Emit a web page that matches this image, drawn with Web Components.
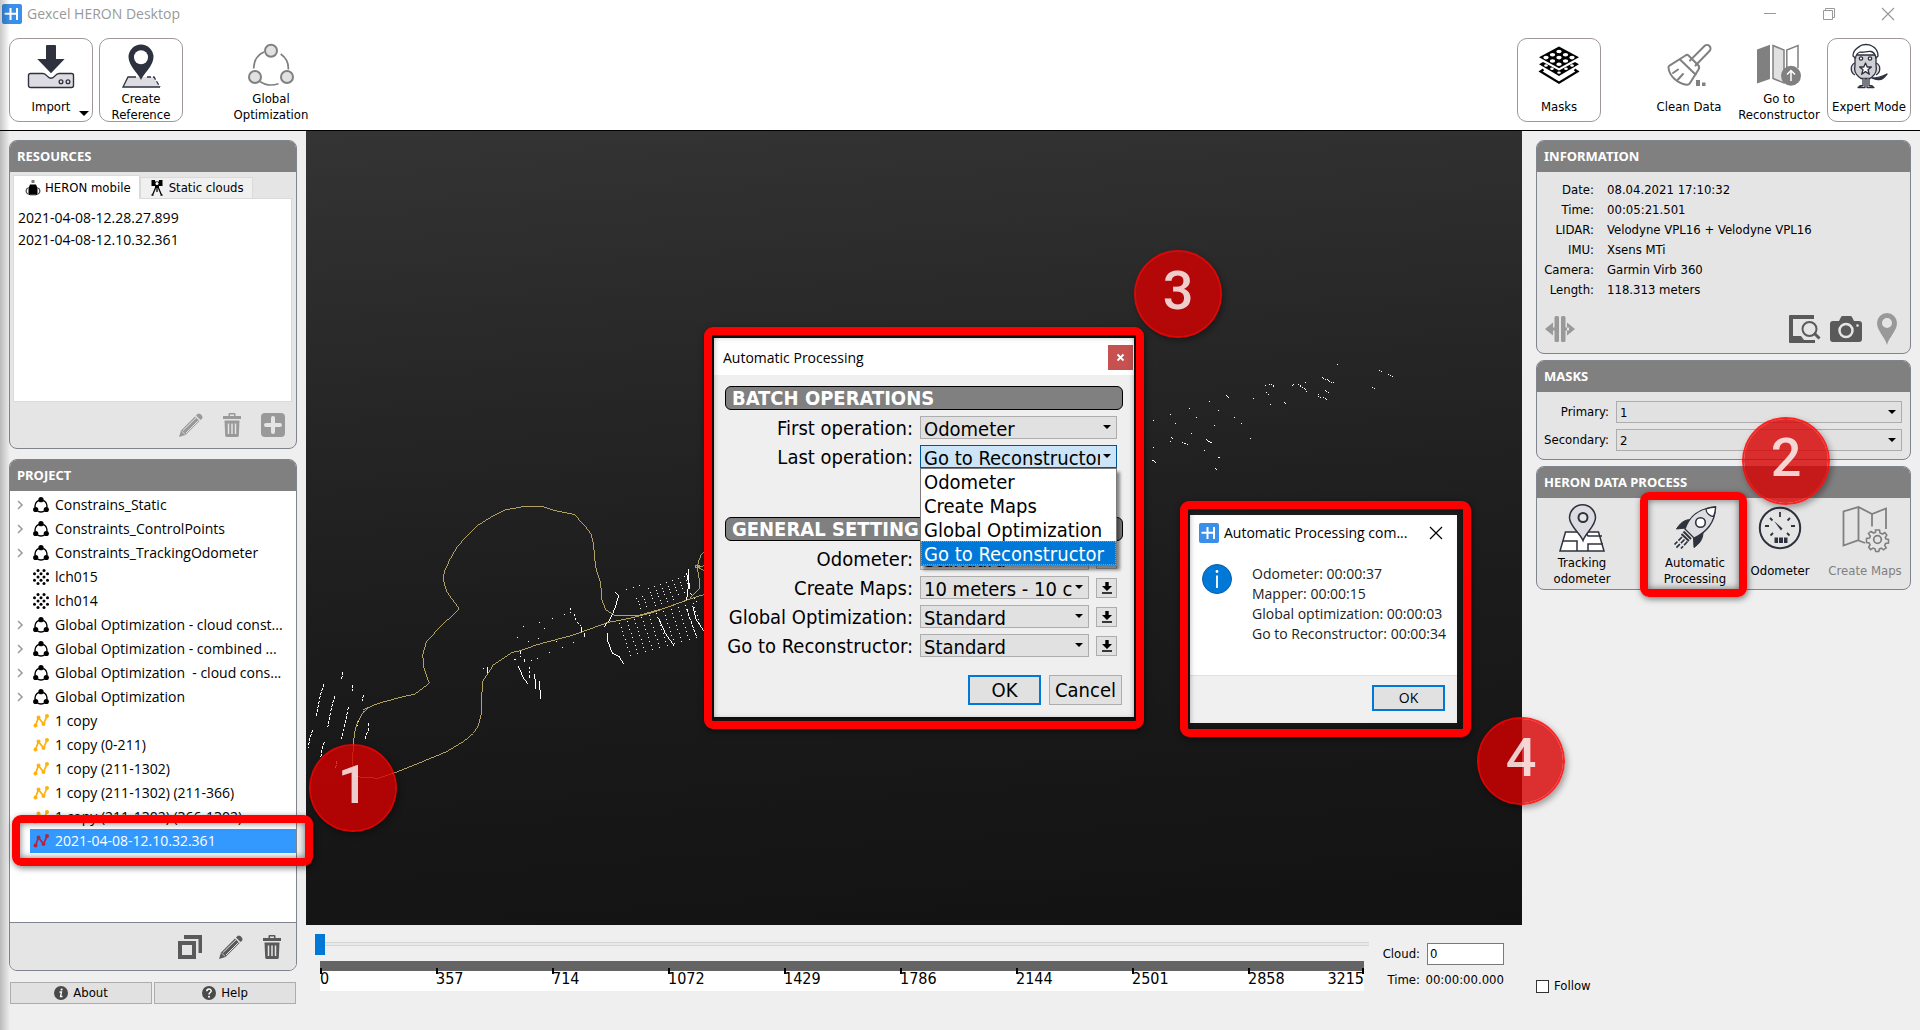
<!DOCTYPE html>
<html lang="en">
<head>
<meta charset="utf-8">
<title>Gexcel HERON Desktop</title>
<style>
  html, body { margin: 0; height: 100%; }
  body { background: #efefef; }
</style>
</head>
<body>
<heron-app></heron-app>
<script>
const BASE = `
  *, *::before, *::after { box-sizing: border-box; }
  :host { box-sizing: border-box; }
  button { font: inherit; color: inherit; margin: 0; padding: 0; border: 0; background: none; }
  ul, dl, dd, h2, p { margin: 0; padding: 0; list-style: none; }
  svg { display: block; }
`;

const D = '#2e323e';
const ICONS = {
  logo: ['0 0 20 20', `<rect width="20" height="20" rx="2" fill="#3a8fe8"/><path d="M8.500 4v12M15 4v12M2.500 9.800H15" stroke="#fff" stroke-width="2" fill="none"/>`],
  import: ['0 0 48 48', `<path d="M3.500 30.500H16c4 0 4 4.800 8 4.800s4-4.800 8-4.800h12.500a2 2 0 0 1 2 2v10a2 2 0 0 1-2 2h-41a2 2 0 0 1-2-2v-10a2 2 0 0 1 2-2z" fill="#dcdce2" stroke="${D}" stroke-width="1.400"/><circle cx="34" cy="38.700" r="1.900" fill="none" stroke="${D}" stroke-width="1.300"/><circle cx="41" cy="38.700" r="1.900" fill="none" stroke="${D}" stroke-width="1.300"/><path d="M19 3a1 1 0 0 1 1-1h8a1 1 0 0 1 1 1v13h8.600L24 30.300 10.300 16H19z" fill="${D}"/>`],
  reference: ['0 0 48 48', `<path d="M11 34h26l6 10H6z" fill="#dcdce2"/><path d="M19 34h-8L6 44h37" fill="none" stroke="${D}" stroke-width="1.300"/><path d="M30 34h7l6 10" fill="none" stroke="${D}" stroke-width="1.300" stroke-dasharray="4 2"/><path d="M24 37c-2-6-12.500-14-12.500-23a12.500 12.500 0 0 1 25 0C36.500 23 26 31 24 37z" fill="${D}"/><circle cx="24" cy="14.300" r="7" fill="#fff"/>`],
  global: ['0 0 48 48', `<g fill="none" stroke="#808080" stroke-width="1.700"><path d="M6.700 25.500C7 17 11 11.500 17 9M33.700 11c5 3.500 8 9 7.600 15.500M13 38.500c6 4.300 12 4.300 18.500 2.200"/><g fill="#e1e1e1" stroke-width="2"><circle cx="24" cy="7.700" r="6"/><circle cx="8" cy="34" r="6"/><circle cx="40" cy="34" r="6"/></g></g>`],
  masks: ['0 0 48 48', `<path d="M24 3.500 44 14.300 24 25.200 4 14.300z"/><g fill="#fff"><ellipse cx="24" cy="8.500" rx="2.700" ry="1.800"/><ellipse cx="17.500" cy="11.700" rx="2.700" ry="1.800"/><ellipse cx="30.500" cy="11.700" rx="2.700" ry="1.800"/><ellipse cx="11" cy="14.600" rx="2.700" ry="1.800"/><ellipse cx="24" cy="14.600" rx="2.700" ry="1.800"/><ellipse cx="37" cy="14.600" rx="2.700" ry="1.800"/><ellipse cx="17.500" cy="18" rx="2.700" ry="1.800"/><ellipse cx="30.500" cy="18" rx="2.700" ry="1.800"/><ellipse cx="24" cy="21.300" rx="2.700" ry="1.800"/></g><path d="M4 21.200 8 19l16 8.500L40 19l4 2.200L24 33z"/><g fill="#fff"><ellipse cx="11" cy="22.500" rx="1.800" ry="1.200"/><ellipse cx="17" cy="25.700" rx="1.800" ry="1.200"/><ellipse cx="24" cy="29.600" rx="1.800" ry="1.200"/><ellipse cx="31" cy="25.700" rx="1.800" ry="1.200"/><ellipse cx="37" cy="22.500" rx="1.800" ry="1.200"/></g><path d="M8.500 26.500 5.500 28.500 24 39.800l18.500-11.300-3-2" fill="none" stroke="#000" stroke-width="2.200"/>`],
  clean: ['0 0 48 48', `<g fill="none" stroke="#808080" stroke-width="2" stroke-linejoin="round" stroke-linecap="round"><path d="M25 17.500 39.500 3a3.500 3.500 0 0 1 5 5L30.500 22.500"/><path d="M20.500 12.500c1-1 2-1 3 0l9.500 9.500c1.500 1.500 1.500 3 .5 4.500L25 40c-.8 1.500-2 2-3.500 1.800C12 40 4.500 33 3.500 25c-.2-1 0-1.800 1-2.400z"/><path d="M15 16.500 30.500 31.500M8 30l5-3.500M13 36.500l5-5.500M9 26"/></g><path d="M31 37h4v6h-4zM37 39.500h3.500V43H37z" fill="#808080"/>`],
  recon: ['0 0 48 48', `<path d="M2 6.500 15 1.800V36L2 40.500z" fill="#808080"/><path d="M18 2.500l11 4.500v33L18 35.500z" fill="#e1e1e1" stroke="#808080" stroke-width="1.500"/><path d="M31.800 25V7L43 2.500V25" fill="#fff" stroke="#808080" stroke-width="1.500"/><circle cx="36" cy="32.700" r="10" fill="#808080"/><path d="M36 38V28M32 31.500l4-4 4 4" stroke="#fff" stroke-width="1.500" fill="none"/>`],
  expert: ['0 0 48 48', `<g stroke="${D}" stroke-width="1.300" stroke-linejoin="round"><path d="M27 35c6 0 9-1 15-4-3 4-6 6.500-9 5.500-3 0-4-1-6-1.500z" fill="${D}"/><path d="M10 20c-5 2-5 9 0 12M31 20c5 2 5 9 0 12" fill="#dcdce2"/><path d="M10 12v10c-1 5 0 9 4 12l2 1.500h9l2-1.500c4-3 5-7 4-12V12z" fill="#cfcfd6"/><path d="M8 13C8 6 13 5 15 3c3-2 9-2 12 0 4 2 6 6 6 10l-2 2c-1-5-3-6-5-6.500-4-.5-8 1.500-11 .5-3 1-4 3-4.500 6z" fill="#fff"/><path d="M18 35v7.500c-2 0-4 .5-5 2h7V36M22 36v8.500h7c-1-1.500-3-2-5-2V35" fill="#fff"/><circle cx="16" cy="15.500" r="1.700" fill="#fff"/><circle cx="25" cy="15.500" r="1.700" fill="#fff"/><path d="m20.500 20 1.700 4h4.200L23 26.800l1.300 4.500-3.800-2.700-3.800 2.700 1.300-4.500-3.400-2.800h4.200z" fill="#fff"/></g>`],
  tracking: ['0 0 48 48', `<g stroke="${D}" stroke-width="1.500"><path d="M7.500 28h33L46 47H2z" fill="#fff"/><path d="M5 37h14v10M28 29l2 3h14M30 47v-7h15" fill="none"/><path d="M25 36.500C22 29 11.500 22 11.500 13.800a13 13 0 0 1 26 0C37.500 22 27.500 29 25 36.500z" fill="#dcdce2"/><circle cx="25" cy="13.500" r="4.500" fill="#e5e5e5" stroke-width="2"/></g>`],
  rocket: ['0 0 48 48', `<path d="M20 15.500c-7 0-11 4-14.500 9.500l9.500-1zM32 28c0 8-4 12-9 15.500l-.5-10z" fill="${D}" stroke="${D}"/><g stroke="${D}" stroke-width="1.300"><path d="M14 25C18 13 28 4 44.500 3 44.500 18 35 29 23 34z" fill="#dcdce2"/><path d="M35 5c4-1.600 6-2 9.500-2 0 4-.5 6-2 9.500C39 12.500 35 9 35 5z" fill="#fff"/><circle cx="29.500" cy="18.500" r="4.800" fill="#fff" stroke-width="1.600"/><path d="m12.500 27.500 7.500 7.500M10.500 30l7.500 7" fill="none" stroke-width="2"/><path d="M11 33 3.500 40.500M13.500 35.500 5 44M16.500 37.500l-6.500 7" fill="none" stroke-width="1.700" stroke-dasharray="5 1.500"/></g>`],
  gauge: ['0 0 48 48', `<circle cx="24" cy="24" r="20.200" fill="#e5e5e5" stroke="${D}" stroke-width="2"/><path d="M24 8v5M14 14l2.500 2.500M34 14l-2.500 2.500M9 22h4M39 22h-4M14.500 31.500 17 29M33.500 31.500 31 29" stroke="${D}" stroke-width="1.800"/><path d="m18 17 8.500 7.500-1.500 2z" fill="${D}"/><path d="M18.500 33.500h3.500v5.500h-3.500zM23 33.500h4v5.500h-4zM28 33.500h3.500v5.500h-3.500z" fill="${D}"/>`],
  maps: ['0 0 48 48', `<g fill="none" stroke="#808080" stroke-width="1.800"><path d="M17.500 3v33L2.500 41.500V7.500L17.500 3l13.500 7L45 4.500V25M31 10v12.500M17.500 36.500 24 39"/><circle cx="36.500" cy="35.500" r="3.800"/><path d="M34.500 26h4l.5 3 2.500 1 2.300-1.500 2 2.500-1.500 2.500.7 1.500 2.500.5v3.500l-3 .5-.8 2 1.500 2.300-2.700 2-2-1.700-2 .8-.8 2.600h-3l-.7-2.600-2-.8-2.500 1.500-1.800-2.300 1.300-2.300-.8-2-2.700-.5V34.500l3-.5.8-2-1.800-2.500 2.500-2 2.500 1.500 2-.8z" stroke-width="1.600"/></g>`],
  pencil: ['0 0 24 24', `<path d="M0 24 2 17.500 16 3.500 20.500 8 6.500 22z"/><path d="m17 2.500 1.500-1.500c2-2 5.500 2 5 3.700-.3 1-1.200 1.600-2 2.300z"/><path d="m4 17.500 13-12.700M7 20 19.500 7.500" stroke="#e5e5e5" stroke-width="1"/><path d="m2.500 18 3.700 3.500" stroke="#e5e5e5" stroke-width=".8"/>`],
  trash: ['0 0 24 24', `<path d="M3 3h5.500V1q0-1 1-1h5q1 0 1 1v2H21v3H3zM10 1.500V3h4V1.500z" fill-rule="evenodd"/><path d="M4.500 7.500h15l-.7 15q-.1 1.500-1.500 1.500H6.700q-1.400 0-1.500-1.500z"/><path d="M8.500 10.500V21M12 10.500V21M15.500 10.500V21" stroke="#e5e5e5" stroke-width="1.500"/>`],
  plus: ['0 0 24 24', `<rect width="24" height="24" rx="4"/><path d="M12 5v14M5 12h14" stroke="#e5e5e5" stroke-width="4" stroke-linecap="round"/>`],
  copy: ['0 0 24 24', `<path d="M6 0h18v18h-3.500V4H6z"/><path fill-rule="evenodd" d="M0 6h18v18H0zm4 4v10h10V10z"/>`],
  split: ['0 0 30 26', `<rect x="9.500" width="4.500" height="26" rx="1.500"/><rect x="16" width="4.500" height="26" rx="1.500"/><path d="M8 6.500v13L0 13zM22 6.500v13l8-6.500zM6 11.500h4v3H6zM20 11.500h4v3h-4z"/>`],
  search: ['0 0 32 30', `<path d="M0 2q0-1 1-1h24v4H4v17h8l3 4h11v3H1q-1 0-1-1z"/><circle cx="20.500" cy="15" r="7" fill="#e5e5e5" stroke="currentColor" stroke-width="2"/><path d="m25 19 5.500 5.500" stroke="currentColor" stroke-width="3"/>`],
  camera: ['0 0 32 26', `<path d="M3 5h6l2-4q.5-1 1.500-1h8q1 0 1.500 1l2 4H29q3 0 3 3v15q0 3-3 3H3q-3 0-3-3V8q0-3 3-3z"/><circle cx="16" cy="14.500" r="6.500" fill="none" stroke="#e5e5e5" stroke-width="2.500"/><circle cx="27.500" cy="9.500" r="1.300" fill="#e5e5e5"/>`],
  pin: ['0 0 20 32', `<path fill-rule="evenodd" d="M10 32C8 24 0 18 0 10a10 10 0 0 1 20 0c0 8-8 14-10 22zm0-27a5 5 0 1 0 0 10 5 5 0 0 0 0-10z"/>`],
  cluster: ['0 0 16 16', `<circle cx="8" cy="9" r="6" fill="none" stroke="#000" stroke-width="1.400"/><circle cx="8" cy="2.700" r="2.600"/><circle cx="2.700" cy="12.500" r="2.600"/><circle cx="13.300" cy="12.500" r="2.600"/>`],
  dots: ['0 0 16 16', [[5,1.5],[11,1.5],[1.5,4.8],[8,4.8],[14.5,4.8],[5,8],[11,8],[1.5,11.2],[8,11.2],[14.5,11.2],[5,14.5],[11,14.5]].map(p=>`<circle cx="${p[0]}" cy="${p[1]}" r="1.500"/>`).join('')],
  track: ['0 0 16 16', `<path d="M2.500 12.500 5.500 4.500 10.500 11 14 3" fill="none" stroke="currentColor" stroke-width="1.800"/><circle cx="2.500" cy="12.500" r="2"/><circle cx="5.500" cy="4.500" r="2"/><circle cx="10.500" cy="11" r="2"/><circle cx="14" cy="3" r="2"/>`],
  backpack: ['0 0 16 16', `<path d="M6.500 0h3v3h-3z" fill="#777"/><path d="M5 4.500h6l1 2.500H4z"/><path d="M3.500 7h9v8h-9z"/><path d="M3 8c-2.500 1-2.500 5 0 6M13 8c2.500 1 2.500 5 0 6" fill="none" stroke="#555" stroke-width="1.300"/><path d="M5 15h6" stroke="#777"/>`],
  tripod: ['0 0 16 16', `<path d="M2.500 0h3.500v1.500h4V0h3.500v6h-3.500v2h-4V6H2.500z"/><circle cx="8" cy="3.500" r="1.500" fill="#fff"/><path d="M6.500 8 3.500 15M9.500 8l3 7M8 8v4M2.500 15h2M11.500 15h2" stroke="#000" stroke-width="1.300" fill="none"/>`],
  about: ['0 0 14 14', `<circle cx="7" cy="7" r="7" fill="#4a4a4a"/><circle cx="7.600" cy="3.500" r="1.100" fill="#fff"/><path d="M5.500 6h2L6.500 10.500h2" stroke="#fff" stroke-width="1.300" fill="none"/>`],
  help: ['0 0 14 14', `<circle cx="7" cy="7" r="7" fill="#4a4a4a"/><path d="M4.800 5.300c0-3 4.400-3 4.400-.3C9.200 6.500 7 6.600 7 8.600" stroke="#fff" stroke-width="1.500" fill="none"/><circle cx="7" cy="10.800" r="1" fill="#fff"/>`],
  chevron: ['0 0 8 10', `<path d="m2 1 4 4-4 4" fill="none" stroke="#a0a0a0" stroke-width="1.700"/>`],
  minimize: ['0 0 12 12', `<path d="M0 5.500h12" stroke="currentColor"/>`],
  restore: ['0 0 12 12', `<path d="M.5 2.500h9v9h-9zM2.500 2.500v-2h9v9h-2" fill="none" stroke="currentColor"/>`],
  close: ['0 0 12 12', `<path d="m0 0 12 12M12 0 0 12" fill="none" stroke="currentColor" stroke-width="1.200"/>`],
  cross: ['0 0 7 7', `<path d="m.5.500 6 6M6.500.500l-6 6" fill="none" stroke="#fff" stroke-width="1.800"/>`],
  download: ['0 0 10 12', `<path d="M3.300 0h3.400v4H10L5 9 0 4h3.300zM0 10.300h10v1.500H0z"/>`],
  info: ['0 0 30 30', `<circle cx="15" cy="15" r="14.500" fill="#0078d7" stroke="#0a5ea8"/><path d="M15 11.500V24" stroke="#fff" stroke-width="1.800"/><circle cx="15" cy="7.500" r="1.400" fill="#fff"/>`],
};

class UiIcon extends HTMLElement {
  connectedCallback() {
    const [box, body] = ICONS[this.getAttribute('name')];
    const [, , w, h] = box.split(' ');
    this.attachShadow({ mode: 'open' }).innerHTML = `<style>${BASE}
      :host { display: block; flex: none; width: ${w}px; height: ${h}px; }
      svg { width: 100%; height: 100%; overflow: visible; }</style>
      <svg viewBox="${box}" fill="currentColor" aria-hidden="true">${body}</svg>`;
  }
}
customElements.define('ui-icon', UiIcon);

/* Declares an element whose shadow root is built from a function of the element. */
function define(name, render) {
  customElements.define(name, class extends HTMLElement {
    connectedCallback() {
      if (this.shadowRoot) return;
      const t = document.createElement('template');
      t.innerHTML = render(this);
      this.attachShadow({ mode: 'open' }).append(t.content.cloneNode(true));
    }
  });
}

define('title-bar', () => `<style>${BASE}
  :host { display: flex; align-items: center; gap: 5px; height: 28px; padding: 0 26px 0 2px; background: #fff; color: #999; font: 14px/20px var(--segoe); }
  span { flex: 1; }
  nav { display: flex; gap: 47px; }
  button { display: block; }
</style>
<ui-icon name="logo"></ui-icon><span>Gexcel HERON Desktop</span>
<nav><button aria-label="Minimize"><ui-icon name="minimize"></ui-icon></button><button aria-label="Restore"><ui-icon name="restore"></ui-icon></button><button aria-label="Close"><ui-icon name="close"></ui-icon></button></nav>`);

define('tool-button', el => `<style>${BASE}
  :host { display: block; flex: none; width: 84px; height: 84px; position: relative; }
  button { display: flex; flex-direction: column; align-items: center; width: 100%; height: 84px; padding-top: 4px; border: 1px solid transparent; border-radius: 10px; color: #000; font: 13px/16px var(--tahoma); }
  :host([framed]) button { border-color: #a09898; }
  :host([off]) button { color: #808080; }
  .label { display: flex; flex: none; align-items: center; justify-content: center; height: 32px; margin-top: var(--label-gap, 0); text-align: center; white-space: nowrap; }
  :host([menu]) button::after { content: ""; position: absolute; right: 4px; bottom: 6px; border: 5px solid transparent; border-top-color: #000; border-bottom: 0; }
</style>
<button ${el.hasAttribute('off') ? 'disabled' : ''}><ui-icon name="${el.getAttribute('icon')}"></ui-icon><span class="label"><span><slot></slot></span></span></button>`);

define('side-panel', el => `<style>${BASE}
  :host { display: flex; flex-direction: column; border: 1px solid #80848f; border-radius: 8px; background: #e5e5e5; overflow: hidden; }
  h2 { flex: none; height: 31px; padding: 0 7px; background: #808080; color: #fff; font: bold 13px/31px var(--heading); }
</style>
<h2>${el.getAttribute('heading')}</h2><slot></slot>`);

define('icon-bar', () => `<style>${BASE}
  :host { display: flex; align-items: center; justify-content: flex-end; gap: 17px; height: 46px; padding: 0 11px; color: #999; }
  :host([dark]) { color: #5a5a5a; height: 48px; padding: 0 12px; border-top: 1px solid #80848f; background: #e5e5e5; }
</style><slot></slot>`);

define('icon-button', el => `<style>${BASE}
  :host { display: block; }
  button { display: block; }
</style><button aria-label="${el.getAttribute('label')}"><ui-icon name="${el.getAttribute('icon')}"></ui-icon></button>`);

define('resource-tabs', () => `<style>${BASE}
  :host { display: block; padding: 3px 4px 0 3px; }
  nav { display: flex; align-items: flex-end; }
  button { display: flex; align-items: center; gap: 4px; height: 21px; padding: 0 8px; margin-top: 2px; border: 1px solid #dadada; border-bottom: 0; background: #f0f0f0; color: #000; font: 13px/20px var(--tahoma); }
  button[aria-selected=true] { height: 24px; margin: 0 0 -1px; padding: 0 8px 0 11px; background: #fff; position: relative; }
  ul { height: 204px; padding: 8px 4px; border: 1px solid #dadada; background: #fff; font: 14px/22px var(--segoe); }
</style>
<nav role="tablist"><button role="tab" aria-selected="true"><ui-icon name="backpack"></ui-icon>HERON mobile</button><button role="tab" aria-selected="false"><ui-icon name="tripod"></ui-icon>Static clouds</button></nav>
<ul><li>2021-04-08-12.28.27.899</li><li>2021-04-08-12.10.32.361</li></ul>`);

define('tree-item', el => `<style>${BASE}
  :host { display: flex; align-items: center; height: 24px; padding-left: 6px; font: 14px/24px var(--segoe); }
  .twist { width: 14px; flex: none; }
  .row { flex: 1; display: flex; align-items: center; gap: 6px; padding-left: 3px; min-width: 0; }
  .name { white-space: pre; }
  :host([kind=track]) ui-icon { color: #ffb20f; }
  :host([selected]) .row { background: #3399ff; color: #fff; }
  :host([selected]) ui-icon { color: #b3263f; }
</style>
<span class="twist">${el.getAttribute('kind') === 'cluster' ? '<ui-icon name="chevron"></ui-icon>' : ''}</span><span class="row"><ui-icon name="${el.getAttribute('kind')}"></ui-icon><span class="name"><slot></slot></span></span>`);

define('project-tree', () => {
  const rows = [
    ['cluster', 'Constrains_Static'], ['cluster', 'Constraints_ControlPoints'], ['cluster', 'Constraints_TrackingOdometer'],
    ['dots', 'lch015'], ['dots', 'lch014'],
    ['cluster', 'Global Optimization - cloud const...'], ['cluster', 'Global Optimization - combined ...'],
    ['cluster', 'Global Optimization  - cloud cons...'], ['cluster', 'Global Optimization'],
    ['track', '1 copy'], ['track', '1 copy (0-211)'], ['track', '1 copy (211-1302)'],
    ['track', '1 copy (211-1302) (211-366)'], ['track', '1 copy (211-1302) (366-1302)'], ['track', '2021-04-08-12.10.32.361', 'selected'],
  ];
  return `<style>${BASE} :host { display: block; flex: 1; padding-top: 2px; background: #fff; }</style>` +
    rows.map(r => `<tree-item kind="${r[0]}" ${r[2] || ''}>${r[1]}</tree-item>`).join('');
});

define('text-button', el => `<style>${BASE}
  :host { display: block; }
  button { display: flex; align-items: center; justify-content: center; gap: 5px; width: 100%; height: 100%; border: 1px solid #adadad; background: #e1e1e1; color: #000; }
  :host([primary]) button { border: 2px solid #0078d7; }
</style><button>${el.hasAttribute('icon') ? `<ui-icon name="${el.getAttribute('icon')}"></ui-icon>` : ''}<slot></slot></button>`);

define('combo-field', el => `<style>${BASE}
  :host { display: flex; align-items: center; gap: 7px; height: var(--combo-height, 22px); line-height: 22px; }
  label { flex: none; width: var(--combo-label, 66px); text-align: right; white-space: nowrap; }
  .box { flex: 1; min-width: 0; position: relative; display: flex; }
  select { appearance: none; width: 100%; height: var(--combo-height, 22px); margin: 0; padding: 0 var(--combo-end, 18px) 0 3px; border: 1px solid #adadad; border-radius: 0; background: #e1e1e1; color: #000; font: inherit; line-height: normal; text-overflow: clip; }
  :host([open]) select { background: #cce4f7; border-color: #005499; }
  .box::after { content: ""; position: absolute; right: 6px; top: 9px; border: 4px solid transparent; border-top-color: #000; border-bottom: 0; pointer-events: none; }
</style>
<label for="s">${el.getAttribute('label')}</label><span class="box"><select id="s"><option>${el.getAttribute('value')}</option></select></span><slot></slot>`);

define('info-list', () => `<style>${BASE}
  :host { display: block; padding: 8px 7px 0; font: 13px/20px var(--tahoma); }
  dl { display: grid; grid-template-columns: 50px 1fr; column-gap: 13px; }
  dt { text-align: right; }
  .bar { display: flex; align-items: center; gap: 9px; height: 53px; padding: 4px 6px 0 1px; color: #5a5a5a; }
  .bar :first-child { margin-right: auto; }
  .bar :last-child { margin-left: 6px; }
  .pale { color: #999; }
</style>
<dl><dt>Date:</dt><dd>08.04.2021 17:10:32</dd><dt>Time:</dt><dd>00:05:21.501</dd><dt>LIDAR:</dt><dd>Velodyne VPL16 + Velodyne VPL16</dd><dt>IMU:</dt><dd>Xsens MTi</dd><dt>Camera:</dt><dd>Garmin Virb 360</dd><dt>Length:</dt><dd>118.313 meters</dd></dl>
<div class="bar"><icon-button class="pale" icon="split" label="Split"></icon-button><icon-button icon="search" label="Preview"></icon-button><icon-button icon="camera" label="Camera"></icon-button><icon-button class="pale" icon="pin" label="Position"></icon-button></div>`);

define('cloud-scene', () => {
  const dots = [[160,571],[211,553],[226,580],[268,535],[289,562],[328,514],[355,541],[343,586],[274,610],[403,562],[424,580],[451,625],[313,661],[160,652],[211,634],[214,622],[217,625],[247,637],[253,640],[256,640],[262,643],[319,628],[322,631],[325,634],[328,634],[331,637],[334,637],[355,682],[358,682],[346,715],[349,718],[157,691],[160,691],[163,694],[166,697],[379,496],[382,499],[385,502],[460,505],[496,466],[508,463],[514,463],[520,466],[520,469],[499,487],[505,493],[511,523],[553,517],[556,520],[577,466],[580,463],[595,463],[601,466],[601,471],[607,474],[613,475],[616,457],[616,480],[619,484],[655,493],[655,499],[661,502],[670,502],[676,505],[679,508],[676,481],[679,484],[685,487],[667,442],[670,445],[676,448],[682,448],[685,451],[688,454],[694,457],[700,457],[712,403],[838,421],[844,424],[865,433],[871,436],[877,439],[817,472],[823,475]];
  const seeds = [[652,472],[670,439],[716,427],[757,415],[793,403],[685,484],[715,475],[733,445],[769,484],[787,502],[748,517],[820,487],[712,535],[694,541],[550,565],[979,328],[1000,322],[1018,316]];
  let grid = '';
  for (let r = 0; r < 8; r++) for (let c = 0; c < 9; c++) {
    const x = 1009 + c * 18 + r * 4, y = 355 - c * 6 + r * 10 - (c > 1 ? 16 : 0);
    if (x < 1165 && y < 395 - c * 7) grid += `M${x} ${y}h3`;
  }
  for (let r = 0; r < 9; r++) for (let c = 0; c < 11; c++) {
    const x = 958 + c * 22 + r * 4, y = 432 - c * 6 + r * 12;
    if (x < 1200) grid += `M${x} ${y}h3`;
  }
  return `<style>${BASE}
  :host { display: block; position: absolute; inset: 0; overflow: hidden; background: linear-gradient(176deg, #343434 0%, #272727 30%, #1c1c1c 58%, #121212 100%); }
  svg { width: 1216px; height: 794px; }
</style>
<svg viewBox="306 131 1216 794" shape-rendering="crispEdges" fill="none" aria-hidden="true">
<g transform="translate(300 480) scale(.33333)" stroke-width="3">
<path stroke="#fff" d="${grid}${seeds.map(p => `M${p[0]} ${p[1]}h3`).join('')}"/>
<g stroke="#fff"><path stroke-dasharray="9 4" d="M72 612 60 650 48 710M105 648 95 680 83 742M145 682 135 730 124 776M128 576v12l-6 12M157 615v18M190 645l-3 18M175 722l-5 20M205 730v20l-10 26M38 750 28 780l-3 24M73 785l-6 20-5 30M110 843l-3 24"/>
<path d="M945 337 956 347 945 385 930 418 913 440 M921 458l2 25 14 36 20 10 13 22M1076 415l20 45 26 37M1160 280l6 30-6 50M1165 268l3 60M1178 378l10 40 24 36M655 558l15 35 14 20M718 602l4 55M704 582l3 46M845 440v20M853 458v14M562 560v20"/>
<path stroke-dasharray="7 6" d="M811 384l2 14M822 402l8 24 12 12M660 514l2 16M643 538l8 4M673 538l2 14M688 560l2 40M1160 388l12 36 18 46M1172 340l20 30"/></g>
<g stroke="#b3a163"><path d="M1240 335 1170 357 1100 383 1020 405 990 408 945 406 918 390 906 360 902 310 887 262 880 190 873 162 850 132 822 103 770 93 728 80 668 80 615 90 575 110 535 135 500 168 470 203 450 238 435 270 429 297 440 335 478 387 435 427 380 483 368 525 372 565 388 610 345 642 290 655 235 670 188 690 205 684 190 696 172 728 163 760 160 800 157 845 166 890 235 895 285 878 355 850 440 815 490 785 520 760 536 735 544 700 547 605 580 555 635 518 660 512 715 493 775 477 820 465 870 447 925 427 990 415 1060 397 1170 357"/><path d="M1240 195 1205 222 1197 240 1192 262 1198 300 1200 325 1170 355M1188 256h10v8h-10zM1192 260l48-6M1192 260 1240 290"/></g>
</g>
<g transform="translate(1100 230) scale(.33333)" stroke="#fff" stroke-width="3"><path d="${dots.map(p => `M${p[0]} ${p[1]}h3`).join('')}"/></g>
</svg>`;
});

define('batch-dialog', () => `<style>${BASE}
  :host { display: block; width: 420px; background: #efefef; color: #000; font: 20px/24px var(--tahoma); --combo-label: 197px; --combo-height: 23px; --combo-end: 16px; }
  header { display: flex; align-items: center; justify-content: space-between; height: 37px; padding: 2px 1px 0 9px; background: #fff; font: 14px/20px var(--segoe); }
  .x { display: flex; align-items: center; justify-content: center; width: 25px; height: 25px; background: #c75050; }
  h2 { height: 24px; margin: 0 11px; padding: 0 6px; border: 1px solid #000; border-radius: 6px; background: #808080; color: #fff; font: bold 20px/22px var(--tahoma); }
  .rows { display: flex; flex-direction: column; gap: 6px; padding: 6px 17px 0 2px; }
  main { padding-top: 11px; }
  .first { height: 131px; position: relative; }
  .save { display: flex; align-items: center; justify-content: center; width: 21px; height: 20px; border: 1px solid #adadad; background: #e1e1e1; }
  ul { position: absolute; left: 206px; top: 82px; width: 197px; border: 1px solid #7a7a7a; background: #fff; box-shadow: 3px 4px 3px rgba(0,0,0,.45); z-index: 1; }
  li { height: 24px; padding: 1px 3px 0; white-space: nowrap; }
  li[aria-selected=true] { background: #0078d7; color: #fff; outline: 1px dotted #e08a2e; outline-offset: -1px; }
  footer { display: flex; justify-content: flex-end; gap: 8px; padding: 18px 12px 12px; }
  text-button { width: 73px; height: 30px; }
</style>
<header><span>Automatic Processing</span><button class="x" aria-label="Close"><ui-icon name="cross"></ui-icon></button></header>
<main><section class="first"><h2>BATCH OPERATIONS</h2>
<div class="rows"><combo-field label="First operation:" value="Odometer"></combo-field><combo-field open label="Last operation:" value="Go to Reconstructor"></combo-field></div>
<ul role="listbox"><li role="option">Odometer</li><li role="option">Create Maps</li><li role="option">Global Optimization</li><li role="option" aria-selected="true">Go to Reconstructor</li></ul></section>
<section><h2>GENERAL SETTINGS</h2>
<div class="rows">${[['Odometer:', 'Standard'], ['Create Maps:', '10 meters - 10 cm'], ['Global Optimization:', 'Standard'], ['Go to Reconstructor:', 'Standard']].map(r => `<combo-field label="${r[0]}" value="${r[1]}"><button class="save" aria-label="Save ${r[0]}"><ui-icon name="download"></ui-icon></button></combo-field>`).join('')}</div></section></main>
<footer><text-button primary>OK</text-button><text-button>Cancel</text-button></footer>`);

define('result-dialog', () => `<style>${BASE}
  :host { display: block; width: 267px; background: #fff; color: #222; font: 14px/20px var(--segoe); }
  header { display: flex; align-items: center; gap: 5px; height: 36px; padding: 0 15px 0 9px; color: #000; }
  header span { flex: 1; white-space: nowrap; }
  .body { display: flex; gap: 20px; height: 124px; padding: 13px 12px 0; white-space: nowrap; }
  footer { display: flex; justify-content: flex-end; padding: 9px 12px 12px; border-top: 1px solid #dfdfdf; background: #f0f0f0; }
  text-button { width: 73px; height: 26px; }
</style>
<header><ui-icon name="logo"></ui-icon><span>Automatic Processing com...</span><button aria-label="Close"><ui-icon name="close"></ui-icon></button></header>
<div class="body"><ui-icon name="info"></ui-icon><div><p>Odometer: 00:00:37</p><p>Mapper: 00:00:15</p><p>Global optimization: 00:00:03</p><p>Go to Reconstructor: 00:00:34</p></div></div>
<footer><text-button primary>OK</text-button></footer>`);

define('time-ruler', () => `<style>${BASE}
  :host { display: block; flex: 1; min-width: 0; padding: 9px 0 0 9px; }
  input { appearance: none; display: block; width: 100%; height: 21px; margin: 0; background: linear-gradient(#d2d6d6, #d2d6d6) no-repeat 10px 8px / 100% 1px, linear-gradient(#d2d6d6, #d2d6d6) no-repeat 10px 11px / 100% 1px, linear-gradient(#e7eaea, #e7eaea) no-repeat 10px 9px / 100% 2px; }
  input::-webkit-slider-thumb { appearance: none; width: 10px; height: 21px; background: #0078d7; border: 0; border-radius: 0; }
  input::-webkit-slider-runnable-track { height: 21px; }
  .scale { display: flex; margin: 6px 5px 0; height: 30px; background: linear-gradient(#646464 10px, #fff 10px); font: 16px/20px var(--tahoma); }
  .cell { flex: 1; padding: 8px 0 0; position: relative; display: flex; justify-content: space-between; }
  .cell::before, .cell:last-child::after { content: ""; position: absolute; left: 0; top: 7px; width: 2px; height: 6px; background: #000; }
  .cell:last-child::after { left: auto; right: 0; }
</style>
<input type="range" min="0" max="3215" value="0" aria-label="Cloud position">
<div class="scale">${[0, 357, 714, 1072, 1429, 1786, 2144, 2501].map(n => `<span class="cell">${n}</span>`).join('')}<span class="cell"><span>2858</span><span>3215</span></span></div>`);

define('time-readout', () => `<style>${BASE}
  :host { display: grid; grid-template-columns: 36px 77px; gap: 4px 7px; align-content: start; justify-items: end; align-items: center; padding: 18px 18px 0 0; font: 13px/22px var(--tahoma); white-space: nowrap; }
  input { width: 77px; height: 22px; margin: 0; padding: 0 2px; border: 1px solid #7a7a7a; background: #fff; font: inherit; }
</style>
<label for="c">Cloud:</label><input id="c" value="0"><span>Time:</span><span>00:00:00.000</span>`);

define('red-frame', () => `<style>
  :host { display: block; box-sizing: border-box; position: absolute; border: 8px solid #f00; border-radius: 9px; box-shadow: 1px 2px 6px rgba(0,0,0,.5), inset 0 0 7px rgba(0,0,0,.55); pointer-events: none; }
</style>`);

define('step-badge', () => `<style>
  :host { display: flex; box-sizing: border-box; justify-content: center; position: absolute; width: 88px; height: 88px; border: 2px solid rgba(255,0,0,.85); border-radius: 50%; background: rgba(215,0,0,.8); background-clip: padding-box; box-shadow: 2px 3px 6px rgba(0,0,0,.35); color: rgba(255,255,255,.8); font: 500 54px/78px Roboto, sans-serif; }
</style><slot></slot>`);

define('heron-app', () => `<style>${BASE}
  :host { --tahoma: "DejaVu Sans Condensed", "DejaVu Sans", sans-serif; --heading: "Noto Sans", sans-serif; --segoe: "Open Sans", sans-serif; display: flex; flex-direction: column; position: relative; min-height: 100vh; background: #efefef; color: #000; font: 13px/20px var(--tahoma); overflow: hidden; }
  .tools { display: flex; gap: 6px; height: 103px; padding: 10px 9px 0; background: #fff; border-bottom: 1px solid #000; }
  .tools .apart { margin-left: 40px; }
  .tools .end { margin-left: auto; }
  .work { flex: 1; display: grid; grid-template-columns: 306px 1fr 398px; }
  .left { display: flex; flex-direction: column; padding: 9px 9px 26px; gap: 10px; min-height: 0; }
  .project { flex: 1; }
  .pair { display: grid; grid-template-columns: 1fr 1fr; gap: 2px; height: 23px; padding: 1px 1px 0; }
  .center { display: flex; flex-direction: column; min-width: 0; }
  .view { flex: 1; position: relative; }
  .player { display: flex; gap: 15px; height: 105px; }
  .right { display: flex; flex-direction: column; gap: 6px; padding: 9px 9px 34px 14px; }
  .masks { display: flex; flex-direction: column; gap: 6px; padding: 9px 8px 8px 6px; }
  .process { display: flex; gap: 1px; padding: 1px 3px 6px; --label-gap: 3px; }
  .process :nth-child(2) { margin-left: auto; }
  .follow { display: flex; align-items: center; gap: 5px; margin-top: auto; }
  .follow input { appearance: none; width: 13px; height: 13px; margin: 0; border: 1px solid #333; background: #fff; }
  batch-dialog, result-dialog { position: absolute; }
  batch-dialog { left: 408px; top: 207px; box-shadow: 0 0 0 2px #111; }
  result-dialog { left: 884px; top: 384px; }
  .edge { position: absolute; left: 0; top: 0; bottom: 0; width: 10px; background: linear-gradient(90deg, rgba(0,0,0,.22), rgba(0,0,0,0)); pointer-events: none; }
  .f1 { left: 12px; top: 815px; width: 301px; height: 51px; }
  .f2 { right: 173px; top: 492px; width: 107px; height: 105px; }
  .f3 { left: 704px; top: 327px; width: 440px; height: 402px; }
  .f4 { left: 1180px; top: 501px; width: 291px; height: 236px; }
  .b1 { left: 309px; top: 744px; }
  .b2 { right: 90px; top: 417px; }
  .b3 { left: 1134px; top: 250px; }
  .b4 { left: 1477px; top: 717px; }
</style>
<title-bar></title-bar>
<div class="tools">
  <tool-button framed menu icon="import">Import</tool-button><tool-button framed icon="reference">Create<br>Reference</tool-button><tool-button class="apart" icon="global">Global<br>Optimization</tool-button>
  <tool-button class="end" framed icon="masks">Masks</tool-button><tool-button class="apart" icon="clean">Clean Data</tool-button><tool-button icon="recon">Go to<br>Reconstructor</tool-button><tool-button framed icon="expert">Expert Mode</tool-button>
</div>
<div class="work">
  <div class="left">
    <side-panel heading="RESOURCES"><resource-tabs></resource-tabs><icon-bar><icon-button icon="pencil" label="Rename"></icon-button><icon-button icon="trash" label="Delete"></icon-button><icon-button icon="plus" label="Add"></icon-button></icon-bar></side-panel>
    <side-panel class="project" heading="PROJECT"><project-tree></project-tree><icon-bar dark><icon-button icon="copy" label="Duplicate"></icon-button><icon-button icon="pencil" label="Rename"></icon-button><icon-button icon="trash" label="Delete"></icon-button></icon-bar></side-panel>
    <div class="pair"><text-button icon="about">About</text-button><text-button icon="help">Help</text-button></div>
  </div>
  <div class="center">
    <div class="view"><cloud-scene></cloud-scene><batch-dialog></batch-dialog><result-dialog></result-dialog></div>
    <div class="player"><time-ruler></time-ruler><time-readout></time-readout></div>
  </div>
  <div class="right">
    <side-panel heading="INFORMATION"><info-list></info-list></side-panel>
    <side-panel heading="MASKS"><div class="masks"><combo-field label="Primary:" value="1"></combo-field><combo-field label="Secondary:" value="2"></combo-field></div></side-panel>
    <side-panel heading="HERON DATA PROCESS"><div class="process"><tool-button icon="tracking">Tracking<br>odometer</tool-button><tool-button icon="rocket">Automatic<br>Processing</tool-button><tool-button icon="gauge">Odometer</tool-button><tool-button off icon="maps">Create Maps</tool-button></div></side-panel>
    <label class="follow"><input type="checkbox">Follow</label>
  </div>
</div>
<div class="edge"></div>
<red-frame class="f1"></red-frame><red-frame class="f2"></red-frame><red-frame class="f3"></red-frame><red-frame class="f4"></red-frame>
<step-badge class="b1">1</step-badge><step-badge class="b2">2</step-badge><step-badge class="b3">3</step-badge><step-badge class="b4">4</step-badge>`);
</script>
</body>
</html>
